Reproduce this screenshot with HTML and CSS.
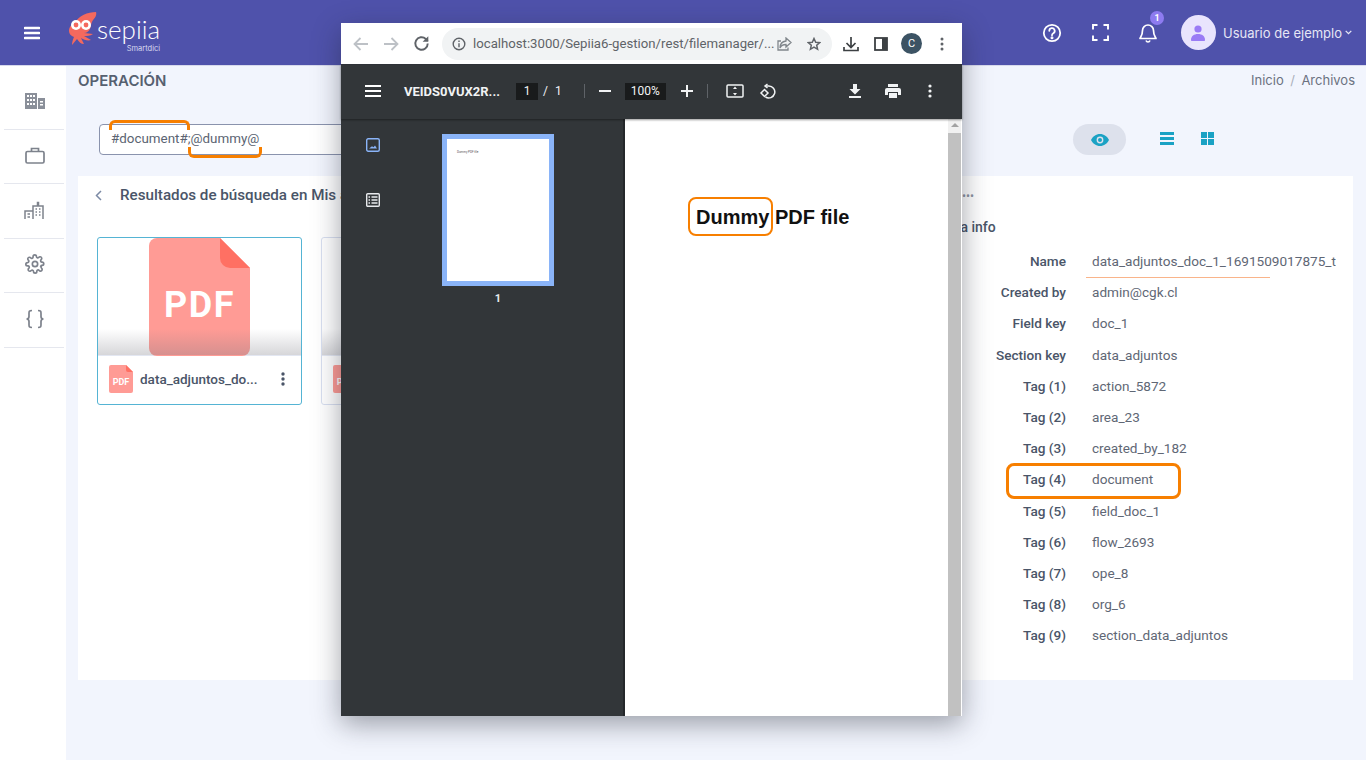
FILE: index.html
```html
<!DOCTYPE html>
<html lang="es">
<head>
    <meta charset="UTF-8">
    <meta name="viewport" content="width=device-width, initial-scale=1.0">
    <title>Sepiia - Archivos</title>
    <link rel="stylesheet" href="styles.css">
</head>
<body>

    <header class="topbar">
        <button class="menu-btn" aria-label="Menu">
            <svg width="16" height="14" viewBox="0 0 16 14"><path d="M1 2h14M1 7h14M1 12h14" stroke="#fff" stroke-width="2.6" stroke-linecap="round"/></svg>
        </button>
        <div class="logo">
            <svg class="logo-mark" width="40" height="34" viewBox="0 0 40 34">
                <path d="M8 10C10 4 20 0 28 0c1 3-1 6-3 8-2 3-2 6-3 9-1 2-3 4-6 4l9 1c-3 2-6 2-9 2l7 4c-3 1-7 0-10-2l3 6c-3 0-5-2-7-5l-5 6c0-3 1-6 2-8-3-1-5-3-5-6 0-4 3-8 7-9z" fill="#f4695e"/>
                <circle cx="8" cy="13" r="5" fill="#fff"/><circle cx="18" cy="13" r="5" fill="#fff"/>
                <circle cx="8" cy="13" r="2.4" fill="#f4695e"/><circle cx="18" cy="13" r="2.4" fill="#f4695e"/>
            </svg>
            <div class="logo-text">
                <span class="logo-name">sepiia</span>
                <span class="logo-sub">Smartdici</span>
            </div>
        </div>
        <div class="topbar-right">
            <svg class="top-icon" width="20" height="20" viewBox="0 0 20 20" fill="none" stroke="#fff" stroke-width="1.8"><circle cx="10" cy="10" r="8.2"/><path d="M7.3 7.8a2.7 2.7 0 1 1 4 2.4c-.9.5-1.3 1-1.3 2" stroke-linecap="round"/><circle cx="10" cy="14.8" r=".6" fill="#fff"/></svg>
            <svg class="top-icon" width="17" height="17" viewBox="0 0 17 17" fill="none" stroke="#fff" stroke-width="1.9"><path d="M1 5.5V1h4.5M11.5 1H16v4.5M16 11.5V16h-4.5M5.500 16H1v-4.5"/></svg>
            <div class="bell">
                <svg width="18" height="20" viewBox="0 0 18 20" fill="none" stroke="#fff" stroke-width="1.7"><path d="M9 2a5.500 5.500 0 0 0-5.500 5.500c0 5-2 6.500-2.500 8h16c-.5-1.500-2.500-3-2.500-8A5.500 5.500 0 0 0 9 2zM7 17.500c.4 1 1.100 1.500 2 1.500s1.600-.5 2-1.500" stroke-linejoin="round"/></svg>
                <span class="badge">1</span>
            </div>
            <div class="user">
                <span class="avatar">
                    <svg width="14" height="16" viewBox="0 0 14 16" fill="#9a7bf5"><circle cx="7" cy="4" r="3.6"/><path d="M0 15c0-4 3-6 7-6s7 2 7 6c0 .6-.4 1-1 1H1c-.6 0-1-.4-1-1z"/></svg>
                </span>
                <span class="user-name">Usuario de ejemplo</span>
                <svg width="7" height="5" viewBox="0 0 7 5" fill="none" stroke="#e6e6f5" stroke-width="1.300"><path d="M.7 .9l2.800 2.800L6.300 .9"/></svg>
            </div>
        </div>
    </header>

    <div class="layout">
        <nav class="sidebar">
            <div class="side-item">
                <svg width="20" height="16" viewBox="0 0 20 16" fill="#8a8f99"><path d="M0 0h12v16H0zM13 5h7v11h-7z"/><path d="M2 2h2v2H2zM5 2h2v2H5zM8 2h2v2H8zM2 6h2v2H2zM5 6h2v2H5zM8 6h2v2H8zM2 10h2v2H2zM5 10h2v2H5zM8 10h2v2H8zM15 8h3v1.500h-3zM15 11h3v1.500h-3z" fill="#fff"/></svg>
            </div>
            <div class="side-item">
                <svg width="20" height="17" viewBox="0 0 20 17" fill="none" stroke="#7d828c" stroke-width="1.700"><rect x="1" y="4.500" width="18" height="11.500" rx="1.500"/><path d="M6.500 4.500V1.500h7v3"/></svg>
            </div>
            <div class="side-item">
                <svg width="21" height="20" viewBox="0 0 21 20" fill="none" stroke="#7d828c" stroke-width="1.500"><path d="M9 19V6h10v13M13.500 6V2.500h1V6M1 19v-8h8"/><path d="M11.500 9h1.500M15 9h1.500M11.500 12h1.500M15 12h1.500M11.500 15h1.500M15 15h1.500M3.500 14h2.500M3.500 17h2.500"/></svg>
            </div>
            <div class="side-item">
                <svg width="20" height="20" viewBox="0 0 24 24" fill="none" stroke="#7d828c" stroke-width="2"><circle cx="12" cy="12" r="3.200"/><path d="M19.400 15a1.600 1.600 0 0 0 .3 1.800l.1.100a2 2 0 1 1-2.800 2.800l-.1-.1a1.600 1.600 0 0 0-2.700 1.200V21a2 2 0 1 1-4 0v-.1a1.600 1.600 0 0 0-2.700-1.100l-.1.100a2 2 0 1 1-2.800-2.800l.1-.1a1.600 1.600 0 0 0-1.200-2.700H3a2 2 0 1 1 0-4h.1a1.600 1.600 0 0 0 1.100-2.700l-.1-.1a2 2 0 1 1 2.800-2.800l.1.100a1.600 1.600 0 0 0 2.700-1.200V3a2 2 0 1 1 4 0v.1a1.600 1.600 0 0 0 2.700 1.100l.1-.1a2 2 0 1 1 2.800 2.800l-.1.100a1.600 1.600 0 0 0 1.200 2.700h.1a2 2 0 1 1 0 4h-.1a1.600 1.600 0 0 0-1.500 1z"/></svg>
            </div>
            <div class="side-item">
                <svg width="20" height="20" viewBox="0 0 20 20" fill="none" stroke="#7d828c" stroke-width="1.700"><path d="M7 1.500c-3 0-3 1-3 3v3c0 1.500-1 2.500-2.500 2.500C3 10 4 11 4 12.500v3c0 2 0 3 3 3M13 1.500c3 0 3 1 3 3v3c0 1.500 1 2.500 2.500 2.500-1.500 0-2.500 1-2.500 2.500v3c0 2 0 3-3 3"/></svg>
            </div>
        </nav>

        <main class="content">
            <div class="title-row">
                <h1>OPERACIÓN</h1>
                <div class="breadcrumb"><span>Inicio</span><i>/</i><span>Archivos</span></div>
            </div>

            <div class="search-row">
                <div class="search-box">#document#;@dummy@</div>
                <div class="view-tools">
                    <span class="eye-pill">
                        <svg width="18" height="12" viewBox="0 0 18 12"><path d="M9 0C5 0 1.800 2.500 0 6c1.800 3.500 5 6 9 6s7.200-2.500 9-6c-1.800-3.500-5-6-9-6z" fill="#1ba2c4"/><circle cx="9" cy="6" r="3.400" fill="#dde1ec"/><circle cx="9" cy="6" r="2" fill="#1ba2c4"/></svg>
                    </span>
                    <svg class="view-list" width="14" height="13" viewBox="0 0 14 13" fill="#1ba2c4"><path d="M0 0h14v3H0zM0 5h14v3H0zM0 10h14v3H0z"/></svg>
                    <svg class="view-grid" width="13" height="13" viewBox="0 0 13 13" fill="#1ba2c4"><path d="M0 0h6v6H0zM7 0h6v6H7zM0 7h6v6H0zM7 7h6v6H7z"/></svg>
                </div>
            </div>

            <section class="panel">
                <div class="results">
                    <div class="results-head">
                        <svg width="7" height="11" viewBox="0 0 7 11" fill="none" stroke="#7c8aa5" stroke-width="1.500"><path d="M6 1L1.500 5.500 6 10"/></svg>
                        <h2>Resultados de búsqueda en Mis archivos</h2>
                    </div>
                    <div class="cards">
                        <article class="file-card selected">
                            <div class="file-thumb">
                                <div class="pdf-big">
                                    <svg class="pdf-shape" width="101" height="118" viewBox="0 0 101 118"><path d="M8 0h63l30 30v80a8 8 0 0 1-8 8H8a8 8 0 0 1-8-8V8a8 8 0 0 1 8-8z" fill="#ff9b95"/><path d="M71 0l30 30H81a10 10 0 0 1-10-10z" fill="#ff7063"/></svg>
                                    <span>PDF</span>
                                </div>
                            </div>
                            <div class="file-foot">
                                <span class="pdf-small">
                                    <svg class="pdf-shape" width="24" height="28" viewBox="0 0 24 28"><path d="M2 0h15l7 7v19a2 2 0 0 1-2 2H2a2 2 0 0 1-2-2V2a2 2 0 0 1 2-2z" fill="#ff9b95"/><path d="M17 0l7 7h-5a2 2 0 0 1-2-2z" fill="#ff7063"/></svg>
                                    <span>PDF</span>
                                </span>
                                <span class="file-name">data_adjuntos_do...</span>
                                <svg width="4" height="14" viewBox="0 0 4 14" fill="#4a5568"><circle cx="2" cy="2" r="1.700"/><circle cx="2" cy="7" r="1.700"/><circle cx="2" cy="12" r="1.700"/></svg>
                            </div>
                        </article>
                        <article class="file-card">
                            <div class="file-thumb">
                                <div class="pdf-big">
                                    <svg class="pdf-shape" width="101" height="118" viewBox="0 0 101 118"><path d="M8 0h63l30 30v80a8 8 0 0 1-8 8H8a8 8 0 0 1-8-8V8a8 8 0 0 1 8-8z" fill="#ff9b95"/><path d="M71 0l30 30H81a10 10 0 0 1-10-10z" fill="#ff7063"/></svg>
                                    <span>PDF</span>
                                </div>
                            </div>
                            <div class="file-foot">
                                <span class="pdf-small">
                                    <svg class="pdf-shape" width="24" height="28" viewBox="0 0 24 28"><path d="M2 0h15l7 7v19a2 2 0 0 1-2 2H2a2 2 0 0 1-2-2V2a2 2 0 0 1 2-2z" fill="#ff9b95"/><path d="M17 0l7 7h-5a2 2 0 0 1-2-2z" fill="#ff7063"/></svg>
                                    <span>PDF</span>
                                </span>
                                <span class="file-name">data_adjuntos_do...</span>
                            </div>
                        </article>
                    </div>
                </div>

                <aside class="info">
                    <div class="info-dots">•••</div>
                    <h3>Meta info</h3>
                    <dl class="info-list">
                        <div class="info-row name-row"><dt>Name</dt><dd>data_adjuntos_doc_1_1691509017875_t</dd></div>
                        <div class="info-row"><dt>Created by</dt><dd>admin@cgk.cl</dd></div>
                        <div class="info-row"><dt>Field key</dt><dd>doc_1</dd></div>
                        <div class="info-row"><dt>Section key</dt><dd>data_adjuntos</dd></div>
                        <div class="info-row"><dt>Tag (1)</dt><dd>action_5872</dd></div>
                        <div class="info-row"><dt>Tag (2)</dt><dd>area_23</dd></div>
                        <div class="info-row"><dt>Tag (3)</dt><dd>created_by_182</dd></div>
                        <div class="info-row"><dt>Tag (4)</dt><dd>document</dd></div>
                        <div class="info-row"><dt>Tag (5)</dt><dd>field_doc_1</dd></div>
                        <div class="info-row"><dt>Tag (6)</dt><dd>flow_2693</dd></div>
                        <div class="info-row"><dt>Tag (7)</dt><dd>ope_8</dd></div>
                        <div class="info-row"><dt>Tag (8)</dt><dd>org_6</dd></div>
                        <div class="info-row"><dt>Tag (9)</dt><dd>section_data_adjuntos</dd></div>
                    </dl>
                </aside>
            </section>
        </main>
    </div>

    <!-- annotations over the page -->
    <div class="mark mark-top"></div>
    <div class="mark mark-bottom"></div>
    <div class="mark mark-tag"></div>

    <!-- browser popup with the pdf viewer -->
    <div class="popup">
        <div class="chrome-bar">
            <svg width="16" height="14" viewBox="0 0 16 14" fill="none" stroke="#bdc1c6" stroke-width="1.800"><path d="M15 7H2M7.500 1L1.500 7l6 6"/></svg>
            <svg width="16" height="14" viewBox="0 0 16 14" fill="none" stroke="#bdc1c6" stroke-width="1.800"><path d="M1 7h13M8.500 1l6 6-6 6"/></svg>
            <svg width="17" height="17" viewBox="0 0 15 15" fill="none" stroke="#5f6368" stroke-width="1.700"><path d="M13 7.500A5.500 5.500 0 1 1 11.300 3.500L13 5.200"/><path d="M13.500 1v5h-5" stroke="none" fill="#5f6368"/></svg>
            <div class="address">
                <svg width="14" height="14" viewBox="0 0 14 14" fill="none" stroke="#5f6368" stroke-width="1.400"><circle cx="7" cy="7" r="5.800"/><path d="M7 6.200v4M7 3.600v1.400"/></svg>
                <span class="url">localhost:3000/Sepiia6-gestion/rest/filemanager/...</span>
                <svg class="addr-share" width="15" height="14" viewBox="0 0 15 14" fill="none" stroke="#80868b" stroke-width="1.300"><path d="M9 1l5 4.500L9 10V7.500C6 7.500 4 8.500 3 11c0-4 2-6.500 6-7zM11 10.500V13H1V4h3"/></svg>
                <svg class="addr-star" width="14" height="14" viewBox="0 0 14 14" fill="none" stroke="#5f6368" stroke-width="1.500"><path d="M7 1.500l1.700 3.700 4 .4-3 2.700.9 4L7 10.200l-3.600 2.100.9-4-3-2.700 4-.4z"/></svg>
            </div>
            <div class="chrome-actions">
                <svg width="16" height="16" viewBox="0 0 16 16" fill="none" stroke="#3c4043" stroke-width="1.700"><path d="M8 1v10M3.500 7L8 11.500 12.500 7M1 11v3.500h14V11"/></svg>
                <svg class="side-panel" width="14" height="14" viewBox="0 0 14 14"><rect x="1" y="1" width="12" height="12" fill="none" stroke="#3c4043" stroke-width="1.800"/><rect x="8" y="1" width="5" height="12" fill="#3c4043"/></svg>
                <span class="profile">C</span>
                <svg class="chrome-dots" width="4" height="14" viewBox="0 0 4 14" fill="#5f6368"><circle cx="2" cy="2" r="1.500"/><circle cx="2" cy="7" r="1.500"/><circle cx="2" cy="12" r="1.500"/></svg>
            </div>
        </div>

        <div class="pdf-toolbar">
            <svg class="pdf-menu" width="16" height="12" viewBox="0 0 16 12" stroke="#fff" stroke-width="2"><path d="M0 1h16M0 6h16M0 11h16"/></svg>
            <span class="pdf-title">VEIDS0VUX2R...</span>
            <span class="page-box">1</span>
            <span class="page-of slash">/</span>
            <span class="page-of total">1</span>
            <i class="tool-sep sep-a"></i>
            <svg width="12" height="2" viewBox="0 0 12 2" fill="#f1f3f4"><path d="M0 0h12v2H0z"/></svg>
            <span class="zoom-box">100%</span>
            <svg width="12" height="12" viewBox="0 0 12 12" fill="#f1f3f4"><path d="M5 0h2v5h5v2H7v5H5V7H0V5h5z"/></svg>
            <i class="tool-sep sep-b"></i>
            <svg class="fit-icon" width="18" height="14" viewBox="0 0 18 14"><rect x="1" y="1" width="16" height="12" rx="1" fill="none" stroke="#f1f3f4" stroke-width="1.500"/><path d="M9 2.500L11 5H7zM9 11.500L7 9h4z" fill="#f1f3f4"/></svg>
            <svg class="rotate-icon" width="17" height="17" viewBox="0 0 17 17" fill="none" stroke="#f1f3f4" stroke-width="1.500"><path d="M7 3h2.500a6 6 0 1 1-3 11"/><path d="M8.500 1L6 3l2.500 2" /><path d="M5.500 6.500L9 10l-3.500 3.500L2 10z"/></svg>
            <div class="pdf-actions">
                <svg width="12" height="14" viewBox="0 0 12 14" fill="#f1f3f4"><path d="M4 0h4v5h3.500L6 10.500.5 5H4zM0 12h12v2H0z"/></svg>
                <svg width="16" height="14" viewBox="0 0 16 14" fill="#f1f3f4"><path d="M3 0h10v3H3zM2 4h12a2 2 0 0 1 2 2v5h-3V8H3v3H0V6a2 2 0 0 1 2-2zM4 9h8v5H4z"/></svg>
                <svg class="pdf-dots" width="4" height="14" viewBox="0 0 4 14" fill="#f1f3f4"><circle cx="2" cy="2" r="1.600"/><circle cx="2" cy="7" r="1.600"/><circle cx="2" cy="12" r="1.600"/></svg>
            </div>
        </div>

        <div class="pdf-body">
            <div class="pdf-side">
                <div class="side-tabs">
                    <svg width="14" height="14" viewBox="0 0 14 14" fill="none" stroke="#8ab4f8" stroke-width="1.400"><rect x=".7" y=".7" width="12.600" height="12.600" rx="1.500"/><path d="M3 10.500h8L9 7.500 7.500 9.300 6 8.300z" fill="#8ab4f8" stroke="none"/></svg>
                    <svg width="14" height="14" viewBox="0 0 14 14" fill="none" stroke="#e8eaed" stroke-width="1.400"><rect x=".7" y=".7" width="12.600" height="12.600" rx="1"/><path d="M5.500 4h6M5.500 7h6M5.500 10h6M2.500 4h1.500M2.500 7h1.500M2.500 10h1.500"/></svg>
                </div>
                <div class="thumbs">
                    <div class="thumb-page"><span>Dummy PDF file</span></div>
                    <span class="thumb-num">1</span>
                </div>
            </div>
            <div class="pdf-view">
                <div class="pdf-page">
                    <span class="dummy-text">Dummy PDF file</span>
                    <div class="mark mark-dummy"></div>
                </div>
                <div class="scrollbar">
                    <span class="scroll-arrow"></span>
                    <span class="scroll-thumb"></span>
                </div>
            </div>
        </div>
    </div>

</body>
</html>
```

FILE: styles.css
```css
* {
    margin: 0;
    padding: 0;
    box-sizing: border-box;
}

body {
    position: relative;
    width: 1366px;
    height: 760px;
    overflow: hidden;
    background-color: #f2f5fd;
    color: #4a5568;
    font-family: 'Roboto', sans-serif;
}

/* top bar */
.topbar {
    display: flex;
    align-items: center;
    height: 66px;
    padding: 0 14px 0 24px;
    background-color: #4f52ab;
    border-bottom: 1px solid #d7d9ec;
}

.menu-btn {
    display: flex;
    border: none;
    background: none;
    margin-right: 28px;
}

.logo {
    display: flex;
    align-items: flex-start;
    height: 40px;
}

.logo-mark {
    margin-top: -1px;
    margin-right: -11px;
}

.logo-text {
    display: flex;
    flex-direction: column;
    align-items: flex-end;
    color: #fff;
    margin-top: 5px;
}

.logo-name {
    font-family: 'Lato', sans-serif;
    font-size: 26px;
    font-weight: 300;
    line-height: 22px;
}

.logo-sub {
    font-family: 'Inter', sans-serif;
    font-size: 7.5px;
    line-height: 9px;
    margin-top: 4px;
    color: #d9daf0;
}

.topbar-right {
    display: flex;
    align-items: center;
    margin-left: auto;
}

.top-icon {
    margin-right: 30px;
}

.bell {
    position: relative;
    display: flex;
    margin-right: 24px;
}

.badge {
    position: absolute;
    top: -12px;
    left: 11px;
    width: 14px;
    height: 14px;
    border-radius: 50%;
    background-color: #8d7bf0;
    color: #fff;
    font-size: 9px;
    font-weight: 700;
    line-height: 14px;
    text-align: center;
}

.user {
    display: flex;
    align-items: center;
}

.avatar {
    display: flex;
    align-items: center;
    justify-content: center;
    width: 35px;
    height: 35px;
    border-radius: 50%;
    background-color: #e9e4fd;
    margin-right: 7px;
}

.user-name {
    font-family: 'Inter', sans-serif;
    font-size: 13px;
    color: #e6e6f5;
    margin-right: 3px;
}

/* sidebar */
.layout {
    display: flex;
    height: 694px;
}

.sidebar {
    width: 66px;
    flex-shrink: 0;
    background-color: #fff;
    padding: 9px 2px 0 4px;
}

.side-item {
    display: flex;
    align-items: center;
    justify-content: center;
    height: 54.5px;
    border-bottom: 1px solid #e5e7ee;
    padding: 0 0 2px 1px;
}

/* main */
.content {
    flex: 1;
    padding: 0 13px 0 12px;
}

.title-row {
    display: flex;
    align-items: flex-start;
    justify-content: space-between;
    height: 58px;
    padding-top: 5px;
}

.title-row h1 {
    font-family: 'Inter', sans-serif;
    font-size: 15px;
    font-weight: 600;
    line-height: 19px;
    color: #566070;
}

.breadcrumb {
    display: flex;
    gap: 6.5px;
    margin-right: -2px;
    font-family: 'Inter', sans-serif;
    font-size: 13px;
    line-height: 18px;
    color: #6b7280;
}

.breadcrumb i {
    color: #aab0bb;
    font-style: normal;
}

.search-row {
    display: flex;
    align-items: center;
    justify-content: space-between;
    height: 31px;
    margin-bottom: 21px;
    padding-left: 21px;
}

.search-box {
    width: 500px;
    height: 31px;
    padding: 0 11px;
    background-color: #fff;
    border: 1px solid #8a93ad;
    border-radius: 4px;
    font-size: 13.4px;
    line-height: 27px;
    color: #5b6472;
}

.view-tools {
    display: flex;
    align-items: center;
    margin-right: 139px;
}

.view-list {
    margin-bottom: 3px;
}

.view-grid {
    margin-left: 27px;
    margin-bottom: 3px;
}

.eye-pill {
    display: flex;
    align-items: center;
    justify-content: center;
    width: 53px;
    height: 31px;
    border-radius: 16px;
    background-color: #dde1ec;
    margin-right: 34px;
}

.panel {
    display: flex;
    justify-content: space-between;
    height: 504px;
    background-color: #fff;
}

.results {
    width: 760px;
    padding: 0 0 0 17px;
}

.results-head {
    display: flex;
    align-items: center;
    height: 38px;
    gap: 18px;
    margin-bottom: 23px;
}

.results-head h2 {
    font-size: 15.2px;
    font-weight: 500;
    color: #4a5568;
    white-space: nowrap;
}

.cards {
    display: flex;
    gap: 19px;
    padding-left: 2px;
}

.file-card {
    width: 205px;
    height: 168px;
    border: 1px solid #d8dff0;
    border-radius: 3px;
    overflow: hidden;
}

.file-card.selected {
    border-color: #55b4d4;
}

.file-thumb {
    position: relative;
    display: flex;
    justify-content: center;
    height: 118px;
    border-bottom: 1px solid #e3e7f2;
}

.file-thumb::after {
    content: "";
    position: absolute;
    left: 0;
    right: 0;
    bottom: 0;
    height: 26px;
    background: linear-gradient(rgba(120, 120, 130, 0), rgba(120, 120, 130, .3));
}

.pdf-shape {
    position: absolute;
    left: 0;
    top: 0;
}

.pdf-big {
    position: relative;
    display: flex;
    align-items: center;
    justify-content: center;
    width: 101px;
    height: 118px;
    padding-top: 15px;
    color: #fff;
    font-size: 36px;
    font-weight: 700;
    letter-spacing: 1.5px;
}

.pdf-big span,
.pdf-small span {
    position: relative;
}

.file-foot {
    display: flex;
    align-items: center;
    height: 48px;
    padding: 0 16px 2px 11px;
}

.pdf-small {
    position: relative;
    display: flex;
    align-items: flex-end;
    justify-content: center;
    width: 24px;
    height: 28px;
    padding-bottom: 6px;
    color: #fff;
    font-size: 9px;
    font-weight: 700;
    flex-shrink: 0;
}

.file-name {
    flex: 1;
    margin-left: 7px;
    font-size: 13.5px;
    font-weight: 500;
    white-space: nowrap;
    overflow: hidden;
}

.info {
    width: 418px;
    flex-shrink: 0;
    padding-right: 17px;
}

.info-dots {
    height: 38px;
    padding: 2px 0 0 27px;
    font-size: 12px;
    line-height: 36px;
    color: #8c93a1;
}

.info h3 {
    height: 26px;
    padding-left: 1px;
    font-size: 14px;
    font-weight: 500;
    line-height: 26px;
    color: #4a5568;
}

.info-list {
    padding-top: 5.5px;
}

.info-row {
    display: flex;
    align-items: center;
    height: 31.2px;
    gap: 26px;
    font-size: 13.6px;
}

.info-row dt {
    width: 131px;
    text-align: right;
    font-weight: 500;
    color: #4a5568;
    flex-shrink: 0;
}

.info-row dd {
    width: 244px;
    overflow: hidden;
    white-space: nowrap;
    color: #5f6775;
}

.name-row {
    position: relative;
}

.name-row::after {
    content: "";
    position: absolute;
    left: 151px;
    bottom: -1px;
    width: 184px;
    height: 1px;
    background-color: #f9b48a;
}

/* orange marks */
.mark {
    position: absolute;
    border: 3px solid #f77f00;
}

.mark-top {
    left: 109px;
    top: 120px;
    width: 81px;
    height: 10px;
    border-bottom: none;
    border-radius: 6px 6px 0 0;
}

.mark-bottom {
    left: 188px;
    top: 147px;
    width: 74px;
    height: 11px;
    border-top: none;
    border-radius: 0 0 6px 6px;
}

.mark-tag {
    left: 1006px;
    top: 463px;
    width: 175px;
    height: 36px;
    border-radius: 8px;
}

/* popup window */
.popup {
    position: absolute;
    left: 341px;
    top: 23px;
    width: 621px;
    height: 693px;
    background-color: #fff;
    box-shadow: 0 8px 26px rgba(30, 35, 50, .42);
    display: flex;
    flex-direction: column;
}

.chrome-bar {
    display: flex;
    align-items: center;
    height: 42px;
    padding: 0 18px 0 12px;
    background-color: #fff;
    border-bottom: 1px solid #30343a;
    gap: 14px;
}

.address {
    display: flex;
    align-items: center;
    flex-shrink: 0;
    width: 390px;
    height: 32px;
    margin-left: -2px;
    padding: 0 10px;
    border-radius: 16px;
    background-color: #f1f3f4;
    gap: 7px;
}

.url {
    width: 295px;
    font-size: 13.2px;
    color: #5f6368;
    white-space: nowrap;
}

.addr-share {
    margin-left: 2px;
}

.addr-star {
    margin-left: 8px;
}

.chrome-actions {
    display: flex;
    align-items: center;
    margin-left: -3px;
    gap: 13px;
}

.side-panel {
    margin-left: 2px;
}

.chrome-dots {
    margin-left: 5px;
}

.profile {
    width: 21px;
    height: 21px;
    border-radius: 50%;
    background-color: #3c5364;
    color: #fff;
    font-size: 11px;
    line-height: 21px;
    text-align: center;
}

.pdf-toolbar {
    display: flex;
    align-items: center;
    height: 54px;
    padding: 0 30px 2px 24px;
    background-color: #323639;
    color: #f1f3f4;
    box-shadow: 0 1px 2px rgba(0, 0, 0, .4);
    position: relative;
}

.pdf-title {
    width: 112px;
    margin-left: 23px;
    font-size: 13px;
    font-weight: 700;
    white-space: nowrap;
}

.page-box {
    width: 22px;
    height: 17px;
    background-color: #191b1c;
    font-size: 12px;
    line-height: 17px;
    text-align: center;
}

.page-of {
    font-size: 12px;
}

.slash {
    margin-left: 5px;
}

.total {
    margin-left: 7px;
}

.tool-sep {
    width: 1px;
    height: 14px;
    background-color: #5f6368;
}

.sep-a {
    margin: 0 14px 0 22px;
}

.sep-b {
    margin: 0 18px 0 14px;
}

.zoom-box {
    width: 41px;
    height: 17px;
    margin: 0 15px 0 14px;
    background-color: #191b1c;
    font-size: 12px;
    line-height: 17px;
    text-align: center;
}

.rotate-icon {
    margin-left: 15px;
}

.pdf-actions {
    display: flex;
    align-items: center;
    margin-left: auto;
    gap: 24px;
}

.pdf-dots {
    margin-left: 3px;
}

.pdf-body {
    display: flex;
    flex: 1;
    min-height: 0;
}

.pdf-side {
    display: flex;
    width: 284px;
    background-color: #323639;
    border-right: 2px solid #24272a;
}

.side-tabs {
    display: flex;
    flex-direction: column;
    align-items: center;
    width: 64px;
    padding: 19px 0 0;
    gap: 41px;
    margin-left: 0;
}

.thumbs {
    display: flex;
    flex-direction: column;
    align-items: center;
    padding: 15px 0 0 37px;
}

.thumb-page {
    width: 112px;
    height: 152px;
    padding: 11px 10px;
    background-color: #fff;
    border: 5px solid #8ab4f8;
}

.thumb-page span {
    display: block;
    font-size: 3px;
    line-height: 4px;
    color: #555;
    white-space: nowrap;
}

.thumb-num {
    margin-top: 6px;
    font-size: 11px;
    font-weight: 700;
    color: #e8eaed;
}

.pdf-view {
    flex: 1;
    display: flex;
    background-color: #fff;
}

.pdf-page {
    position: relative;
    flex: 1;
    padding: 86px 0 0 71px;
}

.dummy-text {
    font-family: 'Liberation Sans', sans-serif;
    font-size: 20px;
    font-weight: 700;
    line-height: 24px;
    color: #111;
}

.mark-dummy {
    left: 63px;
    top: 78px;
    width: 85px;
    height: 39px;
    border-width: 2px;
    border-radius: 8px;
}

.scrollbar {
    display: flex;
    flex-direction: column;
    width: 14px;
    background-color: #f1f1f1;
    border-right: 1px solid #fff;
}

.scroll-arrow {
    display: block;
    height: 14px;
    flex-shrink: 0;
    position: relative;
}

.scroll-arrow::before {
    content: "";
    position: absolute;
    left: 3px;
    top: 4px;
    border-left: 4px solid transparent;
    border-right: 4px solid transparent;
    border-bottom: 4px solid #a3a3a3;
}

.scroll-thumb {
    flex: 1;
    background-color: #c1c1c1;
}
```
